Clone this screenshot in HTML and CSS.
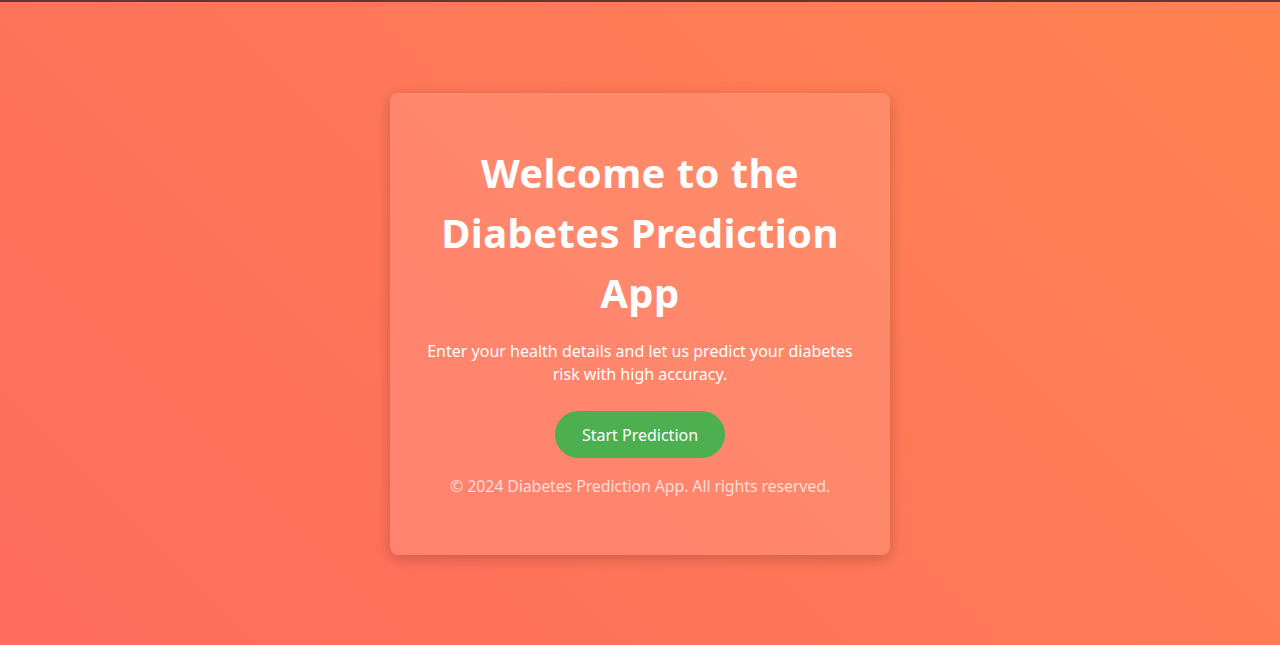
FILE: index.html
```html
<!DOCTYPE html>
<html lang="en">
<head>
<meta charset="utf-8">
<title>Diabetes Prediction App</title>
<link rel="stylesheet" href="styles.css">
</head>
<body>
<main class="page">
  <section class="card">
    <h1 class="title">Welcome to the Diabetes Prediction App</h1>
    <p class="lead">Enter your health details and let us predict your diabetes risk with high accuracy.</p>
    <a class="btn" href="#">Start Prediction</a>
    <p class="foot">© 2024 Diabetes Prediction App. All rights reserved.</p>
  </section>
</main>
</body>
</html>
```

FILE: styles.css
```css
* { box-sizing: border-box; }
html, body { margin: 0; padding: 0; height: 100%; }
body {
  font-family: "Noto Sans", "DejaVu Sans", sans-serif;
  color: #fff;
  background: linear-gradient(45deg, #ff6b5e 0%, #ff7758 50%, #ff8350 100%);
  border-top: 2px solid #5e3a33;
}
.page {
  min-height: calc(100vh - 2px);
  display: flex;
  align-items: center;
  justify-content: center;
}
.card {
  width: 500px;
  padding: 40px 30px 0;
  background: rgba(255, 255, 255, 0.12);
  border-radius: 8px;
  box-shadow: 0 4px 15px rgba(0, 0, 0, 0.2);
  text-align: center;
}
.title {
  margin: 10px 20px 17px;
  font-size: 40px;
  line-height: 60px;
  font-weight: 700;
  letter-spacing: 0.4px;
}
.lead {
  margin: 0 0 25px;
  font-size: 16px;
  line-height: 23px;
}
.btn {
  display: inline-block;
  height: 47px;
  line-height: 48px;
  padding: 0 27px;
  background: #4caf50;
  color: #fff;
  border-radius: 24px;
  text-decoration: none;
  font-size: 16px;
}
.foot {
  margin: 16px 0 0;
  padding-bottom: 57px;
  font-size: 16px;
  letter-spacing: -0.15px;
  line-height: 24px;
  color: rgba(255, 255, 255, 0.72);
}
```
